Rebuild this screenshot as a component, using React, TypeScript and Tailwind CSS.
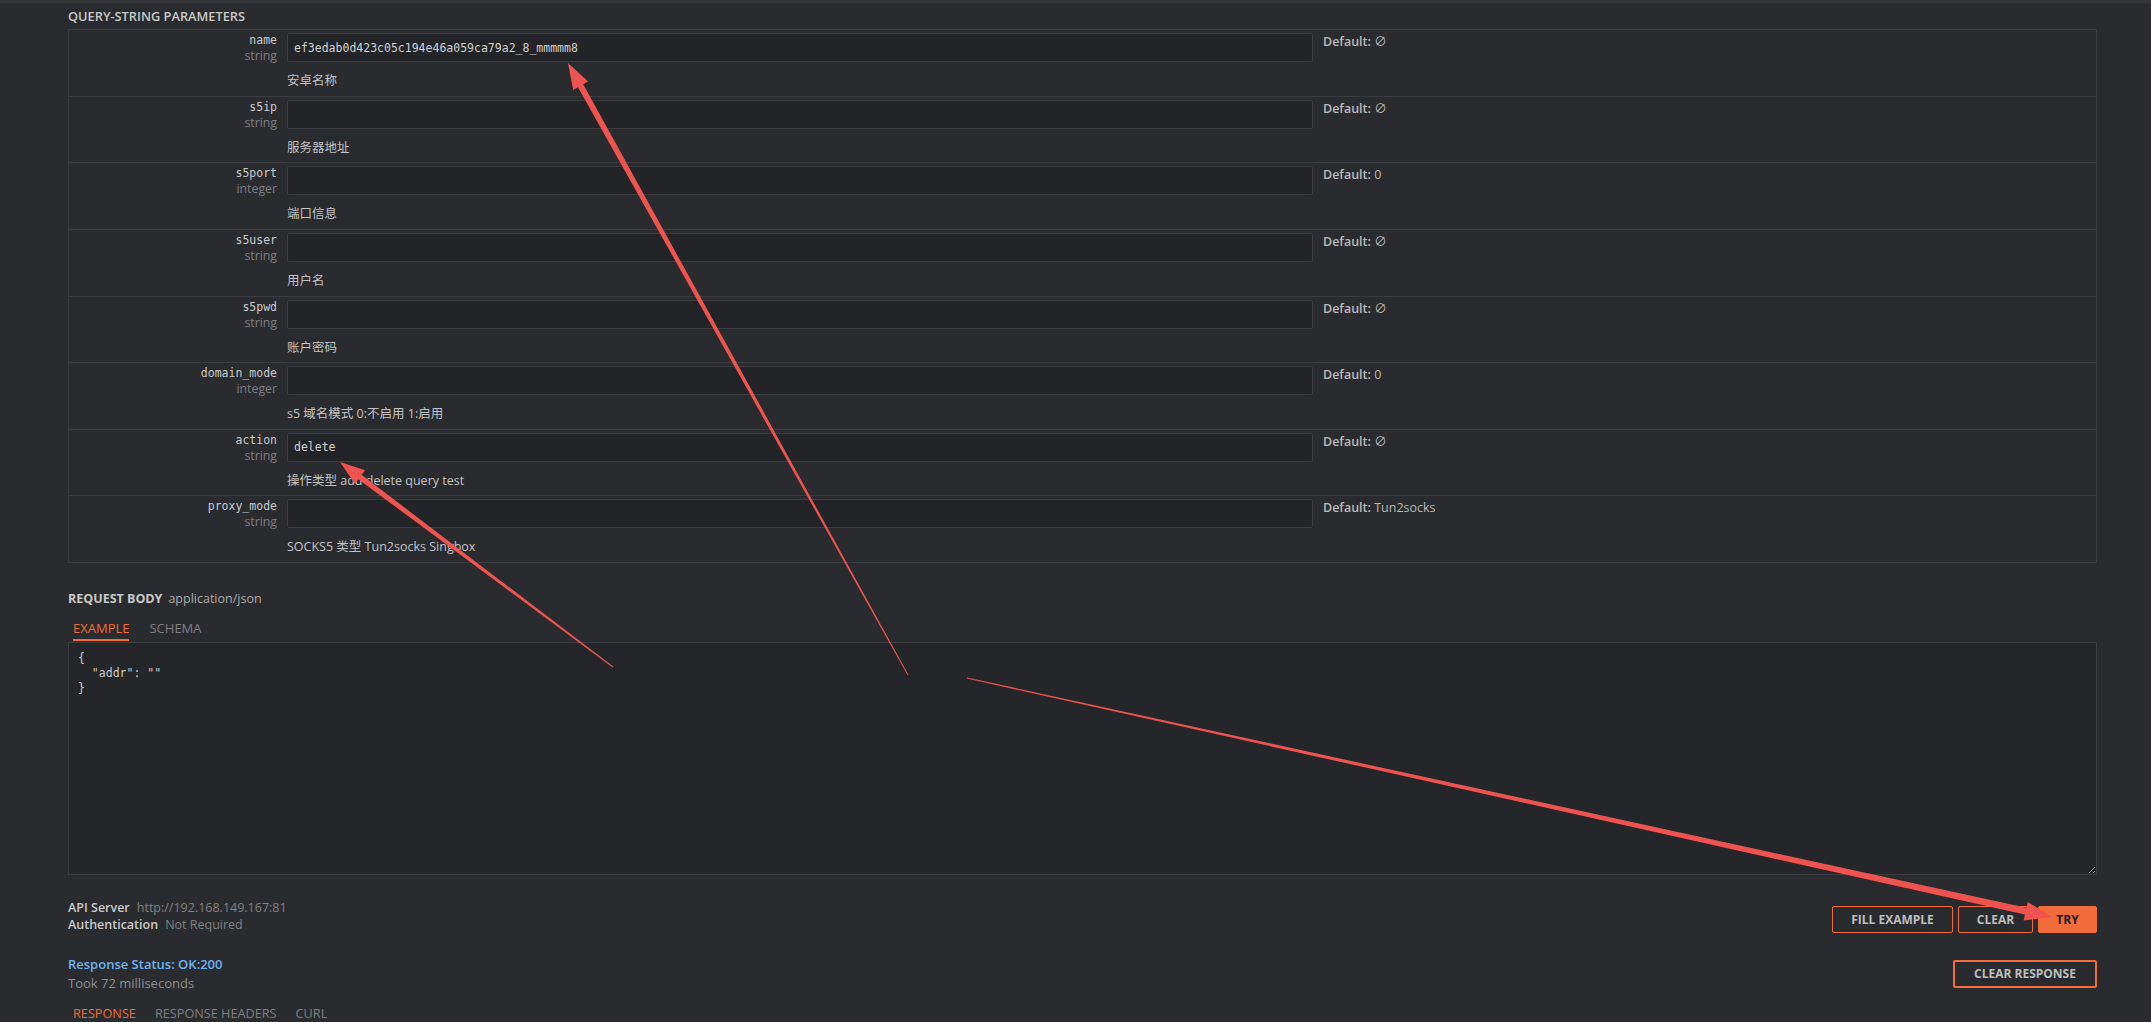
import React from "react";

type Param = {
  name: string;
  type: string;
  value?: string;
  def: string;
  desc: string;
};

const params: Param[] = [
  { name: "name", type: "string", value: "ef3edab0d423c05c194e46a059ca79a2_8_mmmmm8", def: "∅", desc: "安卓名称" },
  { name: "s5ip", type: "string", def: "∅", desc: "服务器地址" },
  { name: "s5port", type: "integer", def: "0", desc: "端口信息" },
  { name: "s5user", type: "string", def: "∅", desc: "用户名" },
  { name: "s5pwd", type: "string", def: "∅", desc: "账户密码" },
  { name: "domain_mode", type: "integer", def: "0", desc: "s5 域名模式 0:不启用 1:启用" },
  { name: "action", type: "string", value: "delete", def: "∅", desc: "操作类型 add delete query test" },
  { name: "proxy_mode", type: "string", def: "Tun2socks", desc: "SOCKS5 类型 Tun2socks Singbox" },
];

// tapered annotation arrow: thin tail, wider shaft, triangular head
function arrowPoints(x1: number, y1: number, x2: number, y2: number, w1: number, w2: number, hl: number, hw: number) {
  const len = Math.hypot(x2 - x1, y2 - y1);
  const dx = (x2 - x1) / len;
  const dy = (y2 - y1) / len;
  const nx = -dy;
  const ny = dx;
  const bx = x2 - dx * hl;
  const by = y2 - dy * hl;
  const pts = [
    [x1 + (nx * w1) / 2, y1 + (ny * w1) / 2],
    [bx + (nx * w2) / 2, by + (ny * w2) / 2],
    [bx + (nx * hw) / 2, by + (ny * hw) / 2],
    [x2, y2],
    [bx - (nx * hw) / 2, by - (ny * hw) / 2],
    [bx - (nx * w2) / 2, by - (ny * w2) / 2],
    [x1 - (nx * w1) / 2, y1 - (ny * w1) / 2],
  ];
  return pts.map((p) => p[0].toFixed(1) + "," + p[1].toFixed(1)).join(" ");
}

function ParamRow({ p }: { p: Param }) {
  return (
    <div className="flex h-[66.625px] border-t border-[#3b3c3f]">
      <div className="w-[208px] pt-[3px] text-right">
        <div className="font-['DejaVu_Sans_Mono',monospace] text-[11.5px] leading-[15px] text-[#c9cacb]">{p.name}</div>
        <div className="text-[12.3px] leading-[15px] text-[#7e7f81]">{p.type}</div>
      </div>
      <div className="ml-[10px] w-[1026px] pt-[3px]">
        <input
          readOnly
          value={p.value ?? ""}
          className="block h-[29px] w-full rounded-[2px] border border-[#3c3d40] bg-[#232427] px-[6px] font-['DejaVu_Sans_Mono',monospace] text-[11.5px] text-[#d0d1d2] outline-none"
        />
        <div className="mt-[10px] text-[12.5px] leading-[18px] text-[#c2c3c4]">{p.desc}</div>
      </div>
      <div className="ml-[10px] pt-[3px] text-[12.5px] leading-[17px] text-[#b9babb]">
        <span className="font-semibold">Default:</span> <span>{p.def}</span>
      </div>
    </div>
  );
}

export default function App() {
  return (
    <div className="relative h-[1022px] overflow-hidden bg-[#2a2b2e] font-['Open_Sans','Noto_Sans_CJK_SC',sans-serif] text-[#c8c9ca]">
      <div className="h-[3px] bg-[#343538]" />
      <div className="pl-[68px] pr-[54px]">
        <div className="mt-[5px] text-[12.8px] font-semibold leading-[16px] text-[#c8c9ca]">QUERY-STRING PARAMETERS</div>

        <div className="mt-[5px] border-x border-b border-[#3b3c3f]">
          {params.map((p) => (
            <ParamRow key={p.name} p={p} />
          ))}
        </div>

        <div className="mt-[28px] flex items-baseline gap-[6px] text-[12.5px] leading-[16px]">
          <span className="font-bold text-[#c8c9ca]">REQUEST BODY</span>
          <span className="text-[#a9aaab]">application/json</span>
        </div>

        <div className="flex gap-[20px] pl-[5px] text-[13px]">
          <div className="border-b-2 border-[#f26b3a] pt-[13px] pb-[3px] leading-[16px] text-[#f26b3a]">EXAMPLE</div>
          <div className="pt-[13px] pb-[3px] leading-[16px] text-[#7f8082]">SCHEMA</div>
        </div>

        <textarea
          readOnly
          value={'{\n  "addr": ""\n}'}
          className="mt-[1px] block h-[233px] w-full border border-[#3c3d40] bg-[#252629] pt-[8px] pl-[9px] font-['DejaVu_Sans_Mono',monospace] text-[11.5px] leading-[15px] text-[#c9cacb] outline-none"
        />

        <div className="mt-[24px] flex items-end justify-between">
          <div className="text-[12.5px] leading-[17px]">
            <div>
              <span className="font-semibold text-[#c8c9ca]">API Server</span>
              <span className="ml-[7px] text-[#808183]">http://192.168.149.167:81</span>
            </div>
            <div>
              <span className="font-semibold text-[#c8c9ca]">Authentication</span>
              <span className="ml-[7px] text-[#808183]">Not Required</span>
            </div>
          </div>
          <div className="flex gap-[5px] text-[12px] font-bold">
            <button className="h-[27px] w-[121px] rounded-[2px] border border-[#f26b3a] text-[#bdbebf]">FILL EXAMPLE</button>
            <button className="h-[27px] w-[75px] rounded-[2px] border border-[#f26b3a] text-[#bdbebf]">CLEAR</button>
            <button className="h-[27px] w-[59px] rounded-[2px] border border-[#f26b3a] bg-[#f26b3a] text-[#1d1d1f]">TRY</button>
          </div>
        </div>

        <div className="mt-[22px] flex items-center justify-between">
          <div className="text-[13px] leading-[19px]">
            <div className="font-semibold text-[#6fb3f2]">Response Status: OK:200</div>
            <div className="text-[#8e8f91]">Took 72 milliseconds</div>
          </div>
          <button className="h-[28px] w-[144px] rounded-[2px] border-2 border-[#f26b3a] text-[12px] font-bold text-[#bdbebf]">
            CLEAR RESPONSE
          </button>
        </div>

        <div className="mt-[12px] flex gap-[19px] pl-[5px] text-[12.7px] leading-[16px]">
          <span className="text-[#f26b3a]">RESPONSE</span>
          <span className="text-[#7f8082]">RESPONSE HEADERS</span>
          <span className="text-[#7f8082]">CURL</span>
        </div>
      </div>

      <svg className="pointer-events-none absolute left-0 top-0" width="2151" height="1022" viewBox="0 0 2151 1022">
        <polygon fill="#ef5350" points={arrowPoints(908, 675, 568, 63, 1, 6, 26, 17)} />
        <polygon fill="#ef5350" points={arrowPoints(613, 667, 340, 462, 1, 5.5, 25, 17)} />
        <polygon fill="#ef5350" points={arrowPoints(967, 678, 2052, 917, 1, 7, 27, 19)} />
      </svg>
    </div>
  );
}
